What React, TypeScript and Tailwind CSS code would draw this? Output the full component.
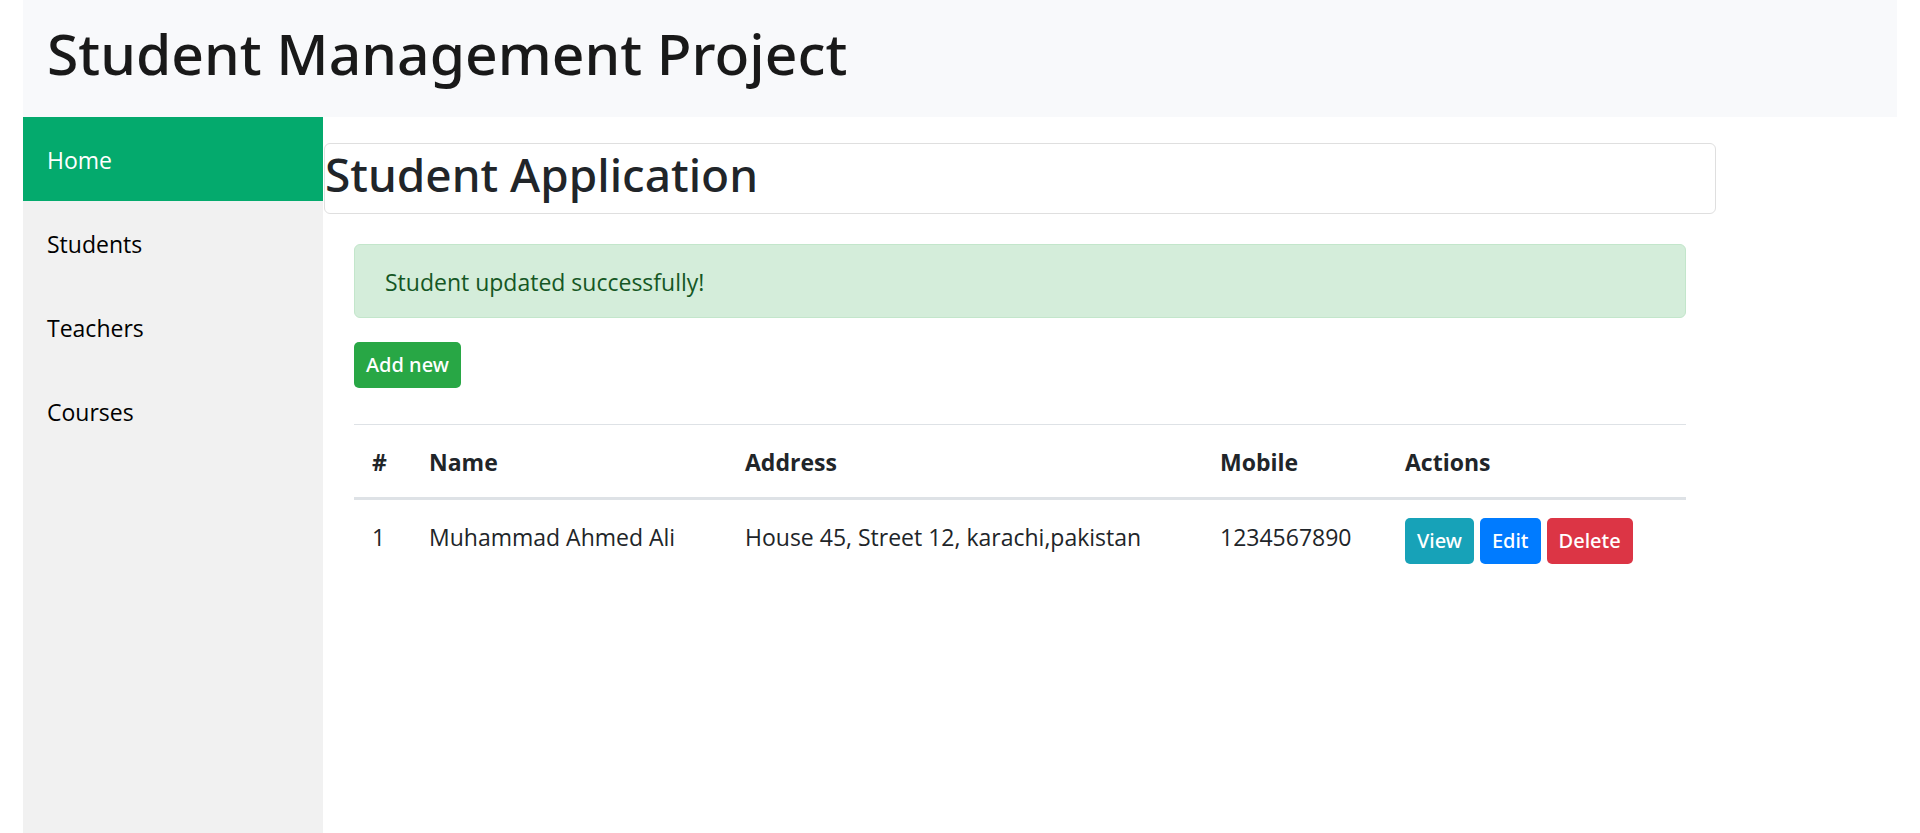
type Student = { id: number; name: string; address: string; mobile: string };

const links = ["Home", "Students", "Teachers", "Courses"];

const students: Student[] = [
  { id: 1, name: "Muhammad Ahmed Ali", address: "House 45, Street 12, karachi,pakistan", mobile: "1234567890" },
];

const cell = "px-[18px] pt-[19px] text-left align-top";
const button = "rounded-[5px] px-3 font-['Noto_Sans','Open_Sans',sans-serif] text-[20px] leading-[46px] font-medium text-white";

export default function App() {
  return (
    <div className="flex min-h-screen flex-col bg-white px-[23px] font-['Open_Sans','Noto_Sans',sans-serif] text-[23px] leading-9 text-[#212529]">
      <header className="bg-[#f8f9fb] px-6 pt-[17px] pb-7">
        <a href="#home" className="block font-['Noto_Sans','Open_Sans',sans-serif] text-[57px] leading-[72px] font-medium text-[#191919]">
          Student Management Project
        </a>
      </header>
      <div className="flex flex-1">
        <nav className="w-[300px] shrink-0 bg-[#f1f1f1]">
          {links.map((label) => (
            <a
              key={label}
              href={`#${label.toLowerCase()}`}
              className={
                label === "Home"
                  ? "block bg-[#04aa6d] px-6 pt-[25px] pb-[23px] text-white"
                  : "block px-6 pt-[25px] pb-[23px] text-black"
              }
            >
              {label}
            </a>
          ))}
        </nav>
        <main className="mt-[26px] ml-px max-w-[1392px] min-w-0 flex-1">
          <h1 className="rounded-md border border-[#dfdfdf] pt-0.5 pb-[11px] font-['Noto_Sans','Open_Sans',sans-serif] text-[46px] leading-[56px] font-medium">
            Student Application
          </h1>
          <div className="px-[30px] pt-[30px]">
            <div role="status" className="rounded-md border border-[#c3e6cb] bg-[#d4edda] px-[30px] pt-[19px] pb-[17px] text-[#155724]">
              Student updated successfully!
            </div>
            <button type="button" className={`${button} mt-6 bg-[#28a745]`}>
              Add new
            </button>
            <table className="mt-9 w-full table-fixed border-separate border-spacing-0">
              <colgroup>
                <col className="w-[57px]" />
                <col className="w-[316px]" />
                <col className="w-[475px]" />
                <col className="w-[185px]" />
                <col />
              </colgroup>
              <thead>
                <tr>
                  {["#", "Name", "Address", "Mobile", "Actions"].map((title) => (
                    <th key={title} scope="col" className={`${cell} border-t border-b-3 border-t-[#dee2e6] border-b-[#dee2e6] pb-[17px] font-bold`}>
                      {title}
                    </th>
                  ))}
                </tr>
              </thead>
              <tbody>
                {students.map((student) => (
                  <tr key={student.id}>
                    <td className={cell}>{student.id}</td>
                    <td className={cell}>{student.name}</td>
                    <td className={cell}>{student.address}</td>
                    <td className={cell}>{student.mobile}</td>
                    <td className="px-[18px] pt-[18px] align-top">
                      <div className="flex gap-1.5">
                        <button type="button" className={`${button} bg-[#17a2b8]`}>View</button>
                        <button type="button" className={`${button} bg-[#007bff]`}>Edit</button>
                        <button type="button" className={`${button} bg-[#dc3545]`}>Delete</button>
                      </div>
                    </td>
                  </tr>
                ))}
              </tbody>
            </table>
          </div>
        </main>
      </div>
    </div>
  );
}
